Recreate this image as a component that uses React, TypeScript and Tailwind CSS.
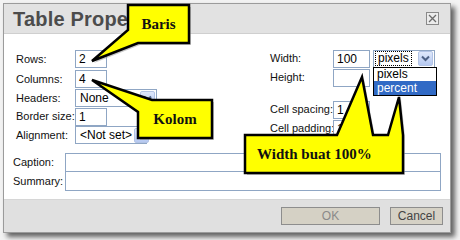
import React from 'react';

const font = { fontFamily: '"Liberation Sans", Arial, sans-serif' };
const serif = { fontFamily: '"Liberation Serif", "Times New Roman", serif' };

function ArrowButton() {
  return (
    <span className="flex h-[15px] w-[15px] shrink-0 items-center justify-center rounded-[2px] border border-[#b3c4e6] bg-gradient-to-b from-[#dfe8fb] to-[#b6c9f1]">
      <svg width="9" height="7" viewBox="0 0 9 7">
        <path d="M1 1.5 L4.5 5 L8 1.5" fill="none" stroke="#4d6185" strokeWidth="2" />
      </svg>
    </span>
  );
}

function TextBox({ value = '', width }: { value?: string; width: string }) {
  return (
    <div className={`flex h-[18px] items-center border border-[#8fa6c4] bg-white px-[3px] text-[12px] text-black ${width}`}>
      {value}
    </div>
  );
}

function Select({ value, width, focus = false }: { value: string; width: string; focus?: boolean }) {
  return (
    <div className={`flex h-[18px] items-center justify-between whitespace-nowrap border border-[#8fa6c4] bg-white pl-[2px] pr-[1px] text-[12px] text-black ${width}`}>
      <span className={`px-[2px] leading-[13px] ${focus ? 'outline outline-1 outline-dotted outline-black' : ''}`}>{value}</span>
      <ArrowButton />
    </div>
  );
}

function Row({ label, labelWidth, height, children }: { label: string; labelWidth: string; height: string; children: React.ReactNode }) {
  return (
    <div className={`flex items-center whitespace-nowrap ${height}`}>
      <span className={`shrink-0 text-[11px] text-[#111] ${labelWidth}`}>{label}</span>
      {children}
    </div>
  );
}

export default function App() {
  return (
    <div className="relative h-[240px] w-[460px] overflow-hidden bg-[#f3f3f3]" style={font}>
      <div className="ml-[3px] mt-[3px] flex h-[230px] w-[448px] flex-col border border-[#9b9b9b] bg-white shadow-[4px_4px_5px_rgba(0,0,0,0.6)]">
        {/* title bar */}
        <div className="flex h-[30px] items-center justify-between border-b border-[#cfcfcf] bg-[#e2e2e2] pl-[9px] pr-[11px]">
          <span className="text-[20px] font-bold tracking-[0.2px] text-[#4c4c4c]">Table Properties</span>
          <span className="flex h-[13px] w-[13px] items-center justify-center border border-[#8a8a8a] bg-[#ececec]">
            <svg width="9" height="9" viewBox="0 0 9 9">
              <path d="M1 1 L8 8 M8 1 L1 8" stroke="#6b6b6b" strokeWidth="1.3" />
            </svg>
          </span>
        </div>

        {/* body */}
        <div className="flex flex-1 flex-col pl-[9px] pr-[8px] pt-[15px]">
          <div className="flex">
            <div className="flex w-[257px] flex-col pl-[3px]">
              <Row label="Rows:" labelWidth="w-[59px]" height="h-[20px]">
                <TextBox value="2" width="w-[32px]" />
              </Row>
              <Row label="Columns:" labelWidth="w-[59px]" height="h-[20px]">
                <TextBox value="4" width="w-[32px]" />
              </Row>
              <Row label="Headers:" labelWidth="w-[59px]" height="h-[18px]">
                <Select value="None" width="w-[82px]" />
              </Row>
              <Row label="Border size:" labelWidth="w-[59px]" height="h-[19px]">
                <TextBox value="1" width="w-[32px]" />
              </Row>
              <Row label="Alignment:" labelWidth="w-[59px]" height="h-[18px]">
                <Select value="<Not set>" width="w-[72px]" />
              </Row>
            </div>
            <div className="flex flex-col">
              <Row label="Width:" labelWidth="w-[63px]" height="h-[19px]">
                <TextBox value="100" width="w-[37px]" />
                <div className="relative ml-[3px]">
                  <Select value="pixels" width="w-[62px]" focus />
                  <div className="absolute left-0 top-[17px] z-10 flex w-[64px] flex-col border border-black bg-white text-[12px]">
                    <span className="h-[13px] pl-[3px] leading-[13px] text-black">pixels</span>
                    <span className="h-[14px] bg-[#316ac5] pl-[3px] leading-[14px] text-white">percent</span>
                  </div>
                </div>
              </Row>
              <Row label="Height:" labelWidth="w-[63px]" height="h-[19px]">
                <TextBox width="w-[37px]" />
              </Row>
              <div className="h-[13px]" />
              <Row label="Cell spacing:" labelWidth="w-[63px]" height="h-[19px]">
                <TextBox value="1" width="w-[37px]" />
              </Row>
              <Row label="Cell padding:" labelWidth="w-[63px]" height="h-[19px]">
                <TextBox value="1" width="w-[37px]" />
              </Row>
            </div>
          </div>
          <div className="mt-[9px] flex flex-col">
            <Row label="Caption:" labelWidth="w-[52px]" height="h-[19px]">
              <div className="h-[19px] w-[376px] border border-[#8fa6c4] bg-white" />
            </Row>
            <Row label="Summary:" labelWidth="w-[52px]" height="h-[19px]">
              <div className="h-[19px] w-[376px] border border-[#8fa6c4] border-t-0 bg-white" />
            </Row>
          </div>
        </div>

        {/* footer */}
        <div className="flex h-[33px] items-start justify-end gap-[10px] border-t border-[#d6d6d6] bg-[#e0e0e0] pr-[7px] pt-[7px]">
          <button className="flex h-[18px] w-[99px] items-center justify-center border border-[#8d8d8d] bg-[#d5d1c5] text-[12px] text-[#8a8a8a]">OK</button>
          <button className="flex h-[18px] w-[53px] items-center justify-center border border-[#8d8d8d] bg-[#d5d1c5] text-[12px] text-[#444]">Cancel</button>
        </div>
      </div>

      {/* callouts */}
      <svg className="pointer-events-none absolute left-0 top-0 z-20" width="460" height="240" viewBox="0 0 460 240">
        <g fill="#9a9a9a" opacity="0.55" transform="translate(2 2)">
          <path d="M128 5 H189 V43 H138 L92 61 L128 30 Z" />
          <path d="M152 100 H212 V138 H138 V112 L92 80 Z" />
          <path d="M245 135 H337 L362 77 L373 135 H388 L399 97 L403 135 V173 H245 Z" />
        </g>
        <g fill="#ffff00" stroke="#000" strokeWidth="2.5" strokeLinejoin="miter">
          <path d="M128 5 H189 V43 H138 L92 61 L128 30 Z" />
          <path d="M152 100 H212 V138 H138 V112 L92 80 Z" />
          <path d="M245 135 H337 L362 77 L373 135 H388 L399 97 L403 135 V173 H245 Z" />
        </g>
      </svg>
      <div className="absolute left-[128px] top-[5px] z-30 flex h-[38px] w-[61px] items-center justify-center text-[15px] font-bold text-[#111]" style={serif}>
        Baris
      </div>
      <div className="absolute left-[138px] top-[100px] z-30 flex h-[38px] w-[74px] items-center justify-center text-[15px] font-bold text-[#111]" style={serif}>
        Kolom
      </div>
      <div className="absolute left-[257px] top-[135px] z-30 flex h-[38px] items-center whitespace-nowrap text-[15px] font-bold text-[#111]" style={serif}>
        Width buat 100%
      </div>
    </div>
  );
}
